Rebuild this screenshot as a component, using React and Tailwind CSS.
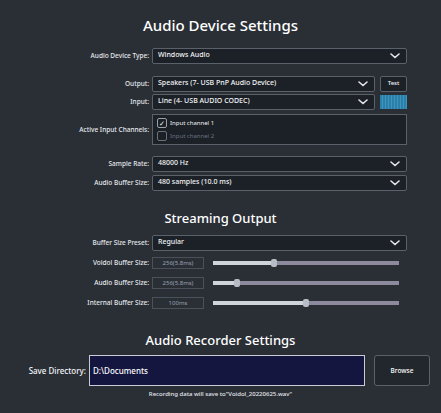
import React from "react";

const Chevron = () => (
  <svg width="10" height="6" viewBox="0 0 10 6" className="shrink-0">
    <path d="M1 1l4 3.5L9 1" fill="none" stroke="#e5e7eb" strokeWidth="1.6" strokeLinecap="round" />
  </svg>
);

const Select = ({ value, className = "" }) => (
  <div className={`h-[16px] flex items-center justify-between pl-[5px] pr-[6px] bg-[#1c2127] border border-[#5b616a] rounded-[2px] text-[7px] font-medium text-gray-100 ${className}`}>
    <span>{value}</span>
    <Chevron />
  </div>
);

const Label = ({ children }) => (
  <div className="w-[152px] shrink-0 text-right pr-[3px] text-[6.5px] font-medium text-gray-200">{children}</div>
);

const Slider = ({ label, value, pct }) => (
  <div className="flex items-center h-[20px]">
    <Label>{label}</Label>
    <div className="w-[52px] h-[12px] border border-[#4b515a] flex items-center justify-center text-[6px] text-gray-400">{value}</div>
    <div className="ml-[9px] w-[186px] h-[4px] bg-[#8c8a9c] relative">
      <div className="h-full bg-[#cfd3da]" style={{ width: pct + "%" }} />
      <div className="absolute top-[-2px] w-[6px] h-[8px] rounded-[2px] bg-[#b8bcc4]" style={{ left: `calc(${pct}% - 3px)` }} />
    </div>
  </div>
);

export default function App() {
  return (
    <div className="w-[441px] h-[413px] bg-[#2a2f36] text-white overflow-hidden" style={{ fontFamily: "'Noto Sans', 'Open Sans', sans-serif" }}>
      <div className="text-center text-[15px] font-medium pt-[14px] h-[44px]">Audio Device Settings</div>
      <div className="flex items-center h-[17px] mt-[3px]">
        <Label>Audio Device Type:</Label>
        <Select value="Windows Audio" className="w-[255px]" />
      </div>
      <div className="flex items-center h-[17px] mt-[11px]">
        <Label>Output:</Label>
        <Select value="Speakers (7- USB PnP Audio Device)" className="w-[223px]" />
        <div className="ml-[5px] w-[27px] h-[16px] border border-[#5b616a] rounded-[2px] bg-[#1c2127] flex items-center justify-center text-[6px] font-medium text-gray-100">Test</div>
      </div>
      <div className="flex items-center h-[17px] mt-[1px]">
        <Label>Input:</Label>
        <Select value="Line (4- USB AUDIO  CODEC)" className="w-[223px]" />
        <div className="ml-[5px] w-[27px] h-[14px] bg-[repeating-linear-gradient(90deg,#2b7fa8_0px,#2b7fa8_2px,#3d95bf_2px,#3d95bf_3px)]" />
      </div>
      <div className="flex items-center mt-[4px]">
        <Label>Active Input Channels:</Label>
        <div className="w-[255px] h-[31px] border border-[#5b616a] bg-[#1c2127] px-[4px] flex flex-col justify-center gap-[3px]">
          <div className="flex items-center gap-[3px] text-[6px] text-gray-100">
            <div className="w-[10px] h-[10px] border border-[#9aa0a8] rounded-[2px] flex items-center justify-center text-[7px] leading-none">✓</div>
            Input channel 1
          </div>
          <div className="flex items-center gap-[3px] text-[6px] text-gray-500">
            <div className="w-[10px] h-[10px] border border-[#6b7078] rounded-[2px]" />
            Input channel 2
          </div>
        </div>
      </div>
      <div className="flex items-center h-[17px] mt-[10px]">
        <Label>Sample Rate:</Label>
        <Select value="48000 Hz" className="w-[255px]" />
      </div>
      <div className="flex items-center h-[17px] mt-[2px]">
        <Label>Audio Buffer Size:</Label>
        <Select value="480 samples (10.0 ms)" className="w-[255px]" />
      </div>
      <div className="text-center text-[13px] font-medium mt-[18px] h-[24px]">Streaming Output</div>
      <div className="flex items-center h-[17px] mt-[1px]">
        <Label>Buffer Size Preset:</Label>
        <Select value="Regular" className="w-[255px]" />
      </div>
      <div className="mt-[2px]">
        <Slider label="Voidol Buffer Size:" value="256(5.8ms)" pct={33} />
        <Slider label="Audio Buffer Size:" value="256(5.8ms)" pct={13} />
        <Slider label="Internal Buffer Size:" value="100ms" pct={50} />
      </div>
      <div className="text-center text-[13px] font-medium mt-[18px] h-[22px]">Audio Recorder Settings</div>
      <div className="flex items-center mt-[2px]">
        <div className="w-[89px] text-right pr-[3px] text-[8px] font-medium text-gray-100">Save Directory:</div>
        <div className="w-[276px] h-[31px] bg-[#15163f] border border-[#c9ccd4] flex items-center pl-[3px] text-[8px] font-medium">D:\Documents</div>
        <div className="ml-[9px] w-[56px] h-[31px] border border-[#5b616a] rounded-[3px] bg-[#22272d] flex items-center justify-center text-[6.5px] font-medium">Browse</div>
      </div>
      <div className="text-center text-[6px] font-medium text-gray-200 mt-[4px]">Recording data will save to"Voidol_20220625.wav"</div>
    </div>
  );
}
